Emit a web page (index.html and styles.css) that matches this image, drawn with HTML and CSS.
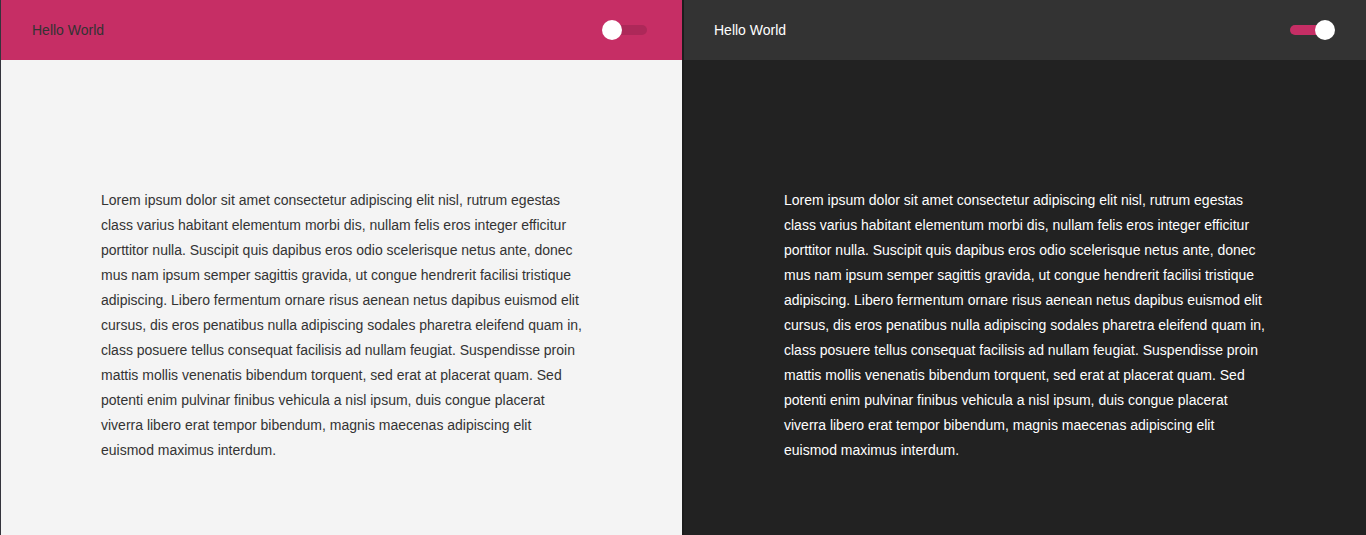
FILE: index.html
```html
<!DOCTYPE html>
<html lang="en">
<head>
<meta charset="utf-8">
<title>Hello World</title>
<link rel="stylesheet" href="styles.css">
</head>
<body>
<div class="compare">
  <section class="panel light">
    <header class="bar">
      <span class="title">Hello World</span>
      <span class="toggle"><span class="knob"></span></span>
    </header>
    <main class="content">
      <p>Lorem ipsum dolor sit amet consectetur adipiscing elit nisl, rutrum egestas class varius habitant elementum morbi dis, nullam felis eros integer efficitur porttitor nulla. Suscipit quis dapibus eros odio scelerisque netus ante, donec mus nam ipsum semper sagittis gravida, ut congue hendrerit facilisi tristique adipiscing. Libero fermentum ornare risus aenean netus dapibus euismod elit cursus, dis eros penatibus nulla adipiscing sodales pharetra eleifend quam in, class posuere tellus consequat facilisis ad nullam feugiat. Suspendisse proin mattis mollis venenatis bibendum torquent, sed erat at placerat quam. Sed potenti enim pulvinar finibus vehicula a nisl ipsum, duis congue placerat viverra libero erat tempor bibendum, magnis maecenas adipiscing elit euismod maximus interdum.</p>
    </main>
  </section>
  <section class="panel dark">
    <header class="bar">
      <span class="title">Hello World</span>
      <span class="toggle on"><span class="knob"></span></span>
    </header>
    <main class="content">
      <p>Lorem ipsum dolor sit amet consectetur adipiscing elit nisl, rutrum egestas class varius habitant elementum morbi dis, nullam felis eros integer efficitur porttitor nulla. Suscipit quis dapibus eros odio scelerisque netus ante, donec mus nam ipsum semper sagittis gravida, ut congue hendrerit facilisi tristique adipiscing. Libero fermentum ornare risus aenean netus dapibus euismod elit cursus, dis eros penatibus nulla adipiscing sodales pharetra eleifend quam in, class posuere tellus consequat facilisis ad nullam feugiat. Suspendisse proin mattis mollis venenatis bibendum torquent, sed erat at placerat quam. Sed potenti enim pulvinar finibus vehicula a nisl ipsum, duis congue placerat viverra libero erat tempor bibendum, magnis maecenas adipiscing elit euismod maximus interdum.</p>
    </main>
  </section>
</div>
</body>
</html>
```

FILE: styles.css
```css
* { box-sizing: border-box; }
html, body { margin: 0; padding: 0; height: 100%; }
body {
  font-family: "Liberation Sans", Arial, sans-serif;
  font-size: 14px;
  border-left: 1px solid #34343c;
  overflow: hidden;
}
.compare {
  display: flex;
  height: 535px;
}
.panel {
  display: flex;
  flex-direction: column;
  height: 100%;
}
.light {
  width: 681px;
  background: #f4f4f4;
  color: #333333;
}
.dark {
  flex: 1;
  background: #222222;
  color: #ffffff;
  border-left: 2px solid rgba(0, 0, 0, 0.16);
}
.bar {
  height: 60px;
  flex: none;
  display: flex;
  align-items: center;
  justify-content: space-between;
  padding: 0 35px 0 31px;
}
.light .bar { background: #c62e65; color: #333333; }
.dark .bar { background: #333333; color: #ffffff; padding: 0 36px 0 30px; }
.title { line-height: 60px; }
.toggle {
  position: relative;
  width: 40px;
  height: 10px;
  border-radius: 5px;
  background: #ad2859;
}
.toggle.on { background: #c62e65; }
.knob {
  position: absolute;
  top: -5px;
  left: -5px;
  width: 20px;
  height: 20px;
  border-radius: 50%;
  background: #ffffff;
}
.toggle.on .knob { left: auto; right: -5px; }
.content {
  flex: 1;
  padding: 128px 0 0 100px;
}
.content p {
  margin: 0;
  width: 482px;
  line-height: 25px;
}
```
